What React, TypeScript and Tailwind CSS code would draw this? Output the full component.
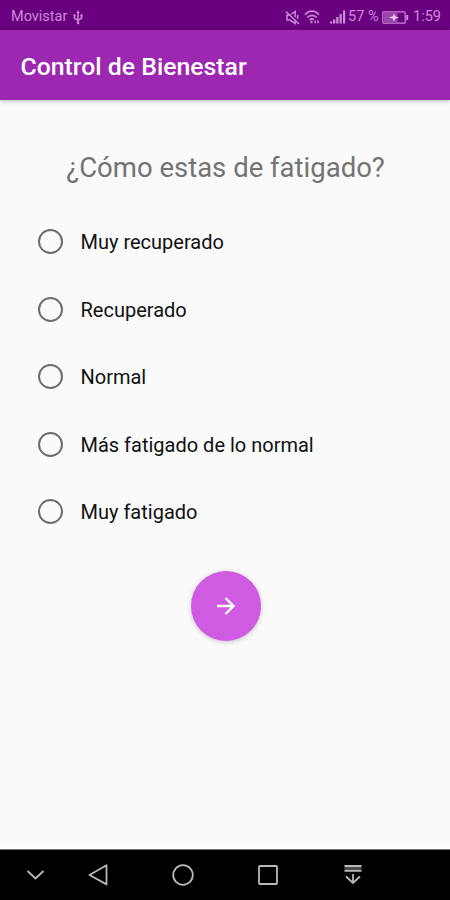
import React from "react";

const options: string[] = [
  "Muy recuperado",
  "Recuperado",
  "Normal",
  "Más fatigado de lo normal",
  "Muy fatigado",
];

function UsbIcon() {
  return (
    <svg className="ml-[6px] h-[15px] w-[10px]" viewBox="0 0 10 15" fill="none" stroke="currentColor" strokeWidth="1.5">
      <path d="M5 2v11M1.5 5v3.4L5 10.3l3.5-1.9V5" />
      <path d="M5 .3 3.2 3h3.6z" fill="currentColor" stroke="none" />
      <circle cx="5" cy="13" r="1.4" fill="currentColor" stroke="none" />
      <path d="M.5 4.2h2v2.2h-2zM7.5 4.2h2v2.2h-2z" fill="currentColor" stroke="none" />
    </svg>
  );
}

function MuteIcon() {
  return (
    <svg className="h-[15px] w-[15px]" viewBox="0 0 15 15" fill="none" stroke="currentColor" strokeWidth="1.5">
      <path d="M5.5 5H2v5h2.8l5.4 3.5V10M6.5 4.2l3.7-2.7v5.8" />
      <path d="M1 1.5 14 14M12.6 5v4" />
    </svg>
  );
}

function WifiIcon() {
  return (
    <svg className="ml-[4px] h-[14px] w-[16px]" viewBox="0 0 16 14" fill="none" stroke="currentColor" strokeWidth="1.6">
      <path d="M1 4.8C5-.1 11-.1 15 4.8M3.2 7.6c2.6-3 7-3 9.6 0M5.6 10c1.2-1.3 3-1.3 4.2-.2" />
      <circle cx="7.5" cy="12" r="1.2" fill="currentColor" stroke="none" />
      <path d="M11.2 10.5v2.8M14 10.5v2.8" strokeWidth="1.4" />
    </svg>
  );
}

function SignalIcon() {
  return (
    <svg className="ml-[10px] h-[14px] w-[16px]" viewBox="0 0 16 14" fill="currentColor">
      <path d="M0 11.5h2.2V13.5H0zM3 9.5h2.3v4H3zM6.2 7h2.3v6.5H6.2zM9.6 4h2.2v9.5H9.6zM13 .5h2.2v13H13z" />
    </svg>
  );
}

function BatteryIcon() {
  return (
    <svg className="h-[13px] w-[27px]" viewBox="0 0 27 13" fill="none" stroke="currentColor" strokeWidth="1.2">
      <rect x=".8" y=".8" width="22.4" height="11.4" rx="1" />
      <path d="M2 2h13.5v9H2z" fill="currentColor" stroke="none" opacity=".5" />
      <path d="M25.2 4v5" strokeWidth="2" />
      <path d="m12 2.5 1.2 2.8 3.8 1.2-3.8 1.2L12 10.5l-1.2-2.8L7 6.5l3.8-1.2z" fill="#f0c8f5" stroke="none" />
    </svg>
  );
}

function StatusBar() {
  return (
    <div className="flex h-[30px] items-center bg-[#6a0080] pt-[4px] pr-[9px] pl-[11px] text-[#c98bd3]">
      <span className="text-[14.5px] leading-none">Movistar</span>
      <UsbIcon />
      <div className="ml-auto flex items-center">
        <MuteIcon />
        <WifiIcon />
        <SignalIcon />
        <span className="ml-[2px] w-[34px] text-[14.5px] leading-none whitespace-nowrap">57 %</span>
        <BatteryIcon />
        <span className="ml-[4px] text-[14.5px] leading-none">1:59</span>
      </div>
    </div>
  );
}

function NavBar() {
  return (
    <nav className="h-[51px] border-t border-[#777] bg-black text-[#b9b9b9]">
      <svg className="h-[50px] w-[450px]" viewBox="0 0 450 50" fill="none" stroke="currentColor" strokeWidth="1.8">
        <path d="m27.5 21 8 7.5 8-7.5" />
        <path d="M106.5 15.2v19.2L89.5 25z" strokeLinejoin="round" />
        <circle cx="183" cy="25" r="9.8" />
        <rect x="259" y="16" width="18" height="18" rx="1" />
        <path d="M344.5 16h17M344.5 20.8h17M353 24v9M346 26.5l7 6.5 7-6.5" />
        <path d="M344.5 18.5h17" strokeWidth="3" opacity=".4" />
      </svg>
    </nav>
  );
}

export default function App() {
  return (
    <div className="flex h-[900px] w-[450px] flex-col overflow-hidden bg-[#fafafa] font-['Roboto',sans-serif]">
      <StatusBar />
      <header className="flex h-[70px] items-center bg-[#9c27b0] pt-[5px] pl-[20.5px] shadow-[0_1px_4px_rgba(0,0,0,0.28)]">
        <h1 className="text-[24.8px] leading-none font-medium text-white">Control de Bienestar</h1>
      </header>
      <main className="flex flex-1 flex-col items-center">
        <h2 className="mt-[52px] ml-px text-[27.5px] leading-[32px] whitespace-nowrap text-[#737373]">¿Cómo estas de fatigado?</h2>
        <div className="mt-[24px] flex w-full flex-col pl-[38px]" role="radiogroup">
          {options.map((label) => (
            <div key={label} className="flex h-[67.5px] items-center" role="radio" aria-checked={false}>
              <span className="h-[25px] w-[25px] rounded-full border-2 border-[#6c6c6c]" />
              <span className="ml-[17.5px] pt-px text-[20px] leading-none text-[#111]">{label}</span>
            </div>
          ))}
        </div>
        <button
          aria-label="Siguiente"
          className="mt-[25px] ml-px flex h-[70px] w-[70px] items-center justify-center rounded-full bg-[#ce5be1] shadow-[0_1px_5px_rgba(0,0,0,0.22)]"
        >
          <svg className="h-[20px] w-[20px]" viewBox="0 0 20 20" fill="none" stroke="white" strokeWidth="2.3">
            <path d="M1 10h16M9.5 2l8 8-8 8" />
          </svg>
        </button>
      </main>
      <div className="h-[4px] bg-white" />
      <NavBar />
    </div>
  );
}
